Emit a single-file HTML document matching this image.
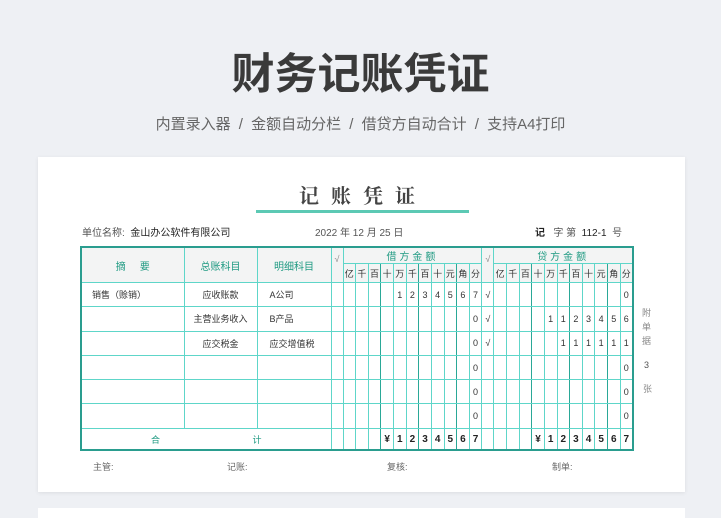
<!DOCTYPE html>
<html><head><meta charset="utf-8"><style>
*{margin:0;padding:0;box-sizing:border-box}
body{width:721px;height:510px;background:#eef0f4;position:relative;overflow:hidden;font-family:"Liberation Sans","Noto Sans CJK SC",sans-serif}
.t{position:absolute;white-space:nowrap}
.card{position:absolute;left:38px;top:157px;width:647px;height:335px;background:#fff;box-shadow:0 1px 4px rgba(0,0,0,.08)}
.card2{position:absolute;left:38px;top:508px;width:647px;height:10px;background:#fff}
table{position:absolute;left:80px;top:246px;width:554px;border-collapse:collapse;table-layout:fixed;border:2px solid #2a9d8f;font-size:9px;color:#333}
td{border:1px solid #5ed6c9;text-align:center;padding:0;overflow:hidden;white-space:nowrap}
.h{background:#f3f4f4;color:#1f9a82}
.d td{height:24.3px}
.k{border-right:1.5px solid #2aa897}
.l{text-align:left;padding-left:10px}
.v{vertical-align:top;padding-top:6px;color:#888}
</style></head><body>
<div class="t" style="left:0;width:721px;top:40px;text-align:center;font-size:43px;font-weight:bold;color:#3a3a3a">财务记账凭证</div>
<div class="t" style="left:0;width:721px;top:113px;text-align:center;font-size:15px;color:#666;word-spacing:4px">内置录入器 / 金额自动分栏 / 借贷方自动合计 / 支持A4打印</div>
<div class="card"></div><div class="card2"></div>
<div class="t" style="left:258px;top:180px;width:210px;text-align:center;font-family:'Noto Serif CJK SC',serif;font-size:20px;font-weight:bold;color:#444;letter-spacing:12px">记账凭证</div>
<div style="position:absolute;left:256px;top:210px;width:213px;height:3px;background:#5cc9b4"></div>
<div class="t" style="left:82px;top:224px;font-size:10px;color:#555">单位名称: &nbsp;<span style="color:#222">金山办公软件有限公司</span></div>
<div class="t" style="left:315px;top:224px;font-size:10px;color:#555">2022 年 12 月 25 日</div>
<div class="t" style="left:535px;top:224px;font-size:10px;color:#555"><b style="color:#222">记</b> &nbsp;&nbsp;字 第 &nbsp;<span style="color:#222">112-1</span>&nbsp; 号</div>
<table>
<colgroup><col style="width:103px"><col style="width:73px"><col style="width:74px"><col style="width:12px">
<col><col><col><col><col><col><col><col><col><col><col>
<col style="width:12px">
<col><col><col><col><col><col><col><col><col><col><col></colgroup>
<tr class="h" style="height:16px"><td rowspan="2" style="font-size:10px">摘 &nbsp;&nbsp;&nbsp;&nbsp;要</td><td rowspan="2" style="font-size:10px">总账科目</td><td rowspan="2" style="font-size:10px">明细科目</td><td rowspan="2" class="v">√</td><td colspan="11" style="font-size:10px;letter-spacing:3px">借方金额</td><td rowspan="2" class="v">√</td><td colspan="11" style="font-size:10px;letter-spacing:3px">贷方金额</td></tr>
<tr class="h" style="height:19px;color:#333"><td>亿</td><td>千</td><td class="k">百</td><td>十</td><td>万</td><td class="k">千</td><td>百</td><td>十</td><td class="k">元</td><td>角</td><td>分</td><td>亿</td><td>千</td><td class="k">百</td><td>十</td><td>万</td><td class="k">千</td><td>百</td><td>十</td><td class="k">元</td><td>角</td><td>分</td></tr>
<tr class="d"><td class="l">销售（赊销）</td><td>应收账款</td><td class="l" style="padding-left:12px">A公司</td><td></td><td></td><td></td><td class="k"></td><td></td><td>1</td><td class="k">2</td><td>3</td><td>4</td><td class="k">5</td><td>6</td><td>7</td><td>√</td><td></td><td></td><td class="k"></td><td></td><td></td><td class="k"></td><td></td><td></td><td class="k"></td><td></td><td>0</td></tr>
<tr class="d"><td></td><td>主营业务收入</td><td class="l" style="padding-left:12px">B产品</td><td></td><td></td><td></td><td class="k"></td><td></td><td></td><td class="k"></td><td></td><td></td><td class="k"></td><td></td><td>0</td><td>√</td><td></td><td></td><td class="k"></td><td></td><td>1</td><td class="k">1</td><td>2</td><td>3</td><td class="k">4</td><td>5</td><td>6</td></tr>
<tr class="d"><td></td><td>应交税金</td><td class="l" style="padding-left:12px">应交增值税</td><td></td><td></td><td></td><td class="k"></td><td></td><td></td><td class="k"></td><td></td><td></td><td class="k"></td><td></td><td>0</td><td>√</td><td></td><td></td><td class="k"></td><td></td><td></td><td class="k">1</td><td>1</td><td>1</td><td class="k">1</td><td>1</td><td>1</td></tr>
<tr class="d"><td></td><td></td><td></td><td></td><td></td><td></td><td class="k"></td><td></td><td></td><td class="k"></td><td></td><td></td><td class="k"></td><td></td><td>0</td><td></td><td></td><td></td><td class="k"></td><td></td><td></td><td class="k"></td><td></td><td></td><td class="k"></td><td></td><td>0</td></tr>
<tr class="d"><td></td><td></td><td></td><td></td><td></td><td></td><td class="k"></td><td></td><td></td><td class="k"></td><td></td><td></td><td class="k"></td><td></td><td>0</td><td></td><td></td><td></td><td class="k"></td><td></td><td></td><td class="k"></td><td></td><td></td><td class="k"></td><td></td><td>0</td></tr>
<tr class="d"><td></td><td></td><td></td><td></td><td></td><td></td><td class="k"></td><td></td><td></td><td class="k"></td><td></td><td></td><td class="k"></td><td></td><td>0</td><td></td><td></td><td></td><td class="k"></td><td></td><td></td><td class="k"></td><td></td><td></td><td class="k"></td><td></td><td>0</td></tr>
<tr style="height:22px;font-size:10px;font-weight:bold;color:#222"><td colspan="3" style="color:#1f9a82;font-weight:normal;font-size:9px">合 &nbsp;&nbsp;&nbsp;&nbsp;&nbsp;&nbsp;&nbsp;&nbsp;&nbsp;&nbsp;&nbsp;&nbsp;&nbsp;&nbsp;&nbsp;&nbsp;&nbsp;&nbsp;&nbsp;&nbsp;&nbsp;&nbsp;&nbsp;&nbsp;&nbsp;&nbsp;&nbsp;&nbsp;&nbsp;&nbsp;&nbsp;&nbsp;&nbsp;&nbsp;&nbsp;&nbsp;计</td><td></td><td></td><td></td><td class="k"></td><td>¥</td><td>1</td><td class="k">2</td><td>3</td><td>4</td><td class="k">5</td><td>6</td><td>7</td><td></td><td></td><td></td><td class="k"></td><td>¥</td><td>1</td><td class="k">2</td><td>3</td><td>4</td><td class="k">5</td><td>6</td><td>7</td></tr>
</table>
<div class="t" style="left:642px;top:306px;font-size:9px;color:#888;line-height:14px;width:12px">附<br>单<br>据</div>
<div class="t" style="left:644px;top:360px;font-size:9px;color:#555">3</div>
<div class="t" style="left:643px;top:382px;font-size:9px;color:#888">张</div>
<div class="t" style="left:93px;top:460px;font-size:9px;color:#666">主管:</div>
<div class="t" style="left:227px;top:460px;font-size:9px;color:#666">记账:</div>
<div class="t" style="left:387px;top:460px;font-size:9px;color:#666">复核:</div>
<div class="t" style="left:552px;top:460px;font-size:9px;color:#666">制单:</div>
</body></html>
